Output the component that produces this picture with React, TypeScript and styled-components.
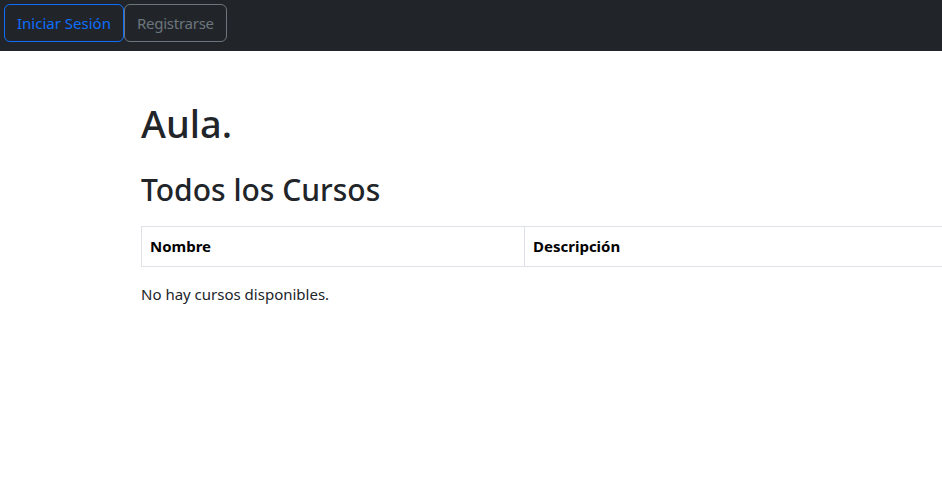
import React from "react";
import styled, { createGlobalStyle } from "styled-components";

const Global = createGlobalStyle`
  html, body { margin: 0; padding: 0; background: #fff; }
  body {
    font-family: "Noto Sans", "Open Sans", sans-serif;
    font-size: 16px;
    line-height: 1.5;
    color: #212529;
    overflow: hidden;
  }
  * { box-sizing: border-box; }
`;

const Page = styled.div`
  width: 942px;
  height: 502px;
  overflow: hidden;
`;

const NavBar = styled.nav`
  background: #212529;
  height: 51px;
  padding: 4px;
  display: flex;
  align-items: flex-start;
`;

const NavButton = styled.button<{ $variant: "primary" | "secondary" }>`
  font-family: inherit;
  font-size: 15px;
  line-height: 24px;
  height: 38px;
  padding: 6px 12px;
  background: transparent;
  border-radius: 6px;
  cursor: pointer;
  letter-spacing: ${(p) => (p.$variant === "primary" ? "0" : "-0.25px")};
  border: 1px solid ${(p) => (p.$variant === "primary" ? "#0d6efd" : "#6c757d")};
  color: ${(p) => (p.$variant === "primary" ? "#0d6efd" : "#6c757d")};
`;

const Main = styled.main`
  padding: 50px 0 0 141px;
  width: 1200px;
`;

const Title = styled.h1`
  font-size: 38px;
  font-weight: 500;
  line-height: 1.2;
  margin: 0 0 25px;
`;

const Subtitle = styled.h2`
  font-size: 30px;
  font-weight: 500;
  line-height: 1.2;
  margin: 0 0 18px;
`;

const Table = styled.table`
  width: 900px;
  border-collapse: collapse;
  margin-bottom: 16px;
`;

const HeadCell = styled.th<{ $w?: number }>`
  text-align: left;
  font-weight: 700;
  font-size: 15px;
  color: #000;
  padding: 8px;
  height: 40px;
  border: 1px solid #dee2e6;
  width: ${(p) => (p.$w ? `${p.$w}px` : "auto")};
`;

const Empty = styled.p`
  margin: 0;
  font-size: 15px;
`;

export default function App() {
  return (
    <Page>
      <Global />
      <NavBar>
        <NavButton $variant="primary">Iniciar Sesión</NavButton>
        <NavButton $variant="secondary">Registrarse</NavButton>
      </NavBar>
      <Main>
        <Title>Aula.</Title>
        <Subtitle>Todos los Cursos</Subtitle>
        <Table>
          <thead>
            <tr>
              <HeadCell $w={383}>Nombre</HeadCell>
              <HeadCell>Descripción</HeadCell>
            </tr>
          </thead>
        </Table>
        <Empty>No hay cursos disponibles.</Empty>
      </Main>
    </Page>
  );
}
